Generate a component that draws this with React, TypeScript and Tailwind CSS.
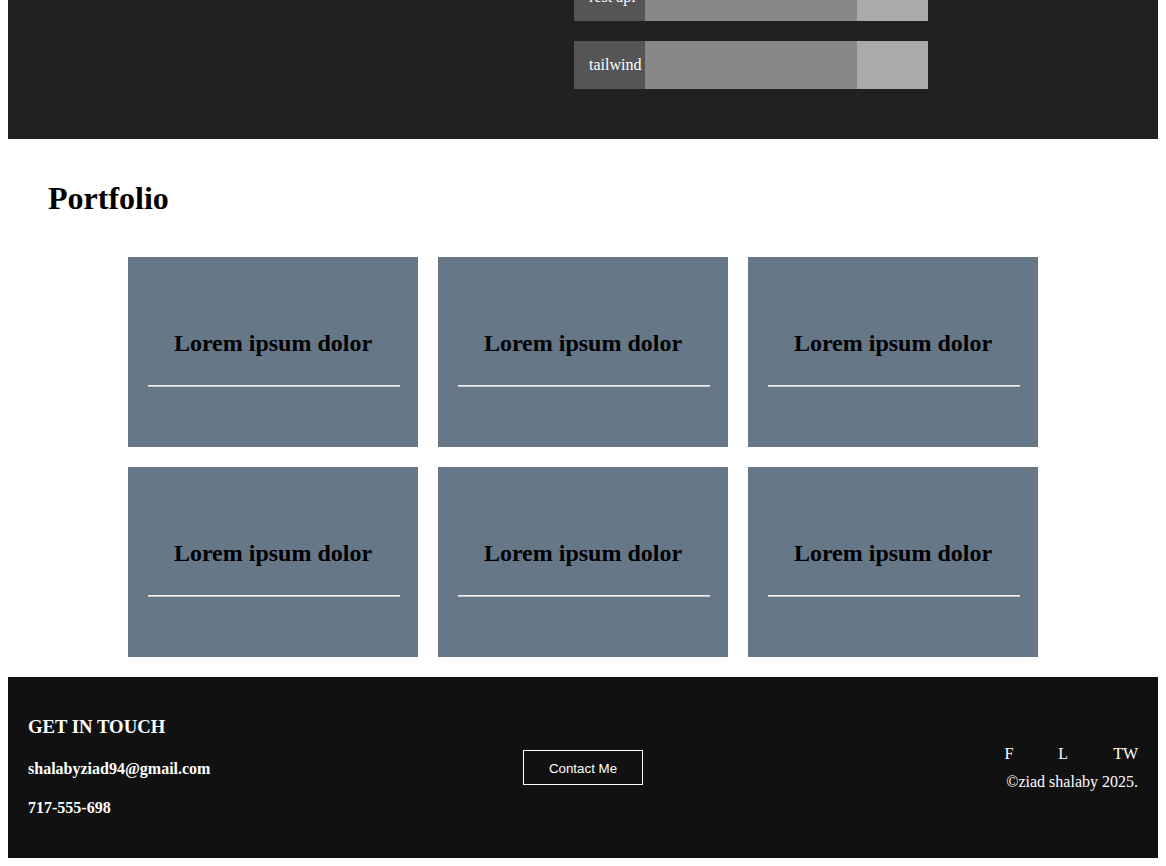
const skills = [
  { name: "rest api", level: 75 },
  { name: "tailwind", level: 75 },
];

const projects = Array.from({ length: 6 }, (_, i) => ({
  id: i,
  title: "Lorem ipsum dolor",
}));

function SkillBar({ name, level }: { name: string; level: number }) {
  return (
    <div className="flex h-[48px] w-[354px]">
      <div className="flex w-[71px] items-center bg-[#555555] pl-[15px] text-[16px] text-white">
        {name}
      </div>
      <div className="flex-1 bg-[#aaaaaa]">
        <div className="h-full bg-[#888888]" style={{ width: `${level}%` }} />
      </div>
    </div>
  );
}

function ProjectCard({ title }: { title: string }) {
  return (
    <div className="h-[190px] bg-[#667788] px-[20px] pt-[72px]">
      <h2 className="text-center text-[24px] font-bold leading-[28px] text-black">
        {title}
      </h2>
      <div className="mt-[28px] -mr-[2px] h-[2px] border-t border-t-[#f2f2f2] border-b border-b-[#c8c8c8]" />
    </div>
  );
}

export default function App() {
  return (
    <div className="min-h-[866px] bg-white px-[8px] pb-[8px] font-['Liberation_Serif',serif]">
      {/* Skills (scrolled past) */}
      <section className="h-[139px] overflow-hidden bg-[#212121]">
        <div className="-mt-[27px] ml-[566px] flex flex-col gap-[20px]">
          {skills.map((s) => (
            <SkillBar key={s.name} name={s.name} level={s.level} />
          ))}
        </div>
      </section>

      {/* Portfolio */}
      <section className="flex flex-col p-[20px]">
        <h1 className="mt-[21.44px] mb-[39.7px] pl-[20px] text-[32px] font-bold leading-[36.8px] text-black">
          Portfolio
        </h1>
        <div className="mx-auto grid w-[910px] grid-cols-3 gap-[20px]">
          {projects.map((p) => (
            <ProjectCard key={p.id} title={p.title} />
          ))}
        </div>
      </section>

      {/* Footer */}
      <footer className="grid grid-cols-3 items-center bg-[#111111] p-[20px] text-white">
        <div>
          <h3 className="mt-[18.72px] text-[18.72px] font-bold leading-[21.5px]">GET IN TOUCH</h3>
          <h4 className="mt-[22.5px] text-[16px] font-bold leading-[18.4px]">
            shalabyziad94@gmail.com
          </h4>
          <h4 className="mt-[21.28px] mb-[20px] text-[16px] font-bold leading-[18.4px]">717-555-698</h4>
        </div>
        <div className="flex justify-center">
          <button className="h-[35px] w-[120px] border border-white pt-[3px] font-['Liberation_Sans',Arial,sans-serif] text-[13.33px] text-white">
            Contact Me
          </button>
        </div>
        <div className="mt-[2px] flex flex-col items-end justify-self-end gap-[9px] text-[16px] leading-[18.4px]">
          <div className="flex gap-[45px]">
            <a>F</a>
            <a>L</a>
            <a>TW</a>
          </div>
          <p>©ziad shalaby 2025.</p>
        </div>
      </footer>
    </div>
  );
}
